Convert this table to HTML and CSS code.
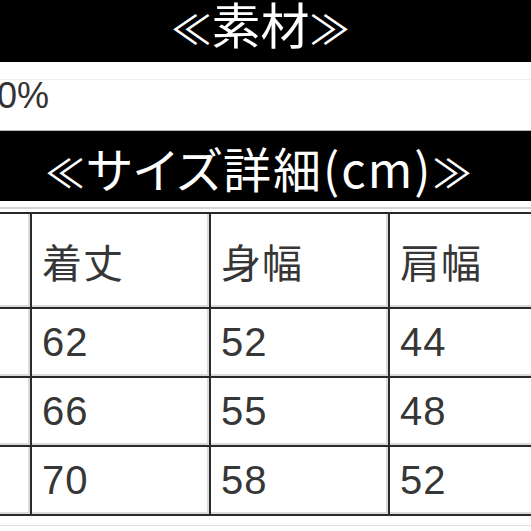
FILE: index.html
```html
<!DOCTYPE html>
<html lang="ja">
<head>
<meta charset="utf-8">
<title>素材・サイズ詳細</title>
<link rel="stylesheet" href="styles.css">
</head>
<body>
<section class="spec">
  <h2 class="band band-material"><span class="mark">≪</span>素材<span class="mark">≫</span></h2>
  <div class="material">
    <p class="material-text">綿100%</p>
  </div>
  <h2 class="band band-size"><span class="mark">≪</span>サイズ詳細(cm)<span class="mark">≫</span></h2>
  <div class="size-wrap">
    <table class="size-table">
      <colgroup>
        <col class="col-label">
        <col class="col-val">
        <col class="col-val">
        <col class="col-val">
      </colgroup>
      <tr class="row-head">
        <td>サイズ</td><td>着丈</td><td>身幅</td><td>肩幅</td>
      </tr>
      <tr class="row-data">
        <td>M</td><td>62</td><td>52</td><td>44</td>
      </tr>
      <tr class="row-data">
        <td>L</td><td>66</td><td>55</td><td>48</td>
      </tr>
      <tr class="row-data">
        <td>XL</td><td>70</td><td>58</td><td>52</td>
      </tr>
    </table>
  </div>
</section>
</body>
</html>
```
FILE: styles.css
```css
html, body {
  margin: 0;
  padding: 0;
  background: #ffffff;
}

body {
  width: 531px;
  overflow: hidden;
  font-family: "Liberation Sans", "Noto Sans CJK JP", sans-serif;
  color: #303030;
}

.spec {
  width: 531px;
}

.band {
  margin: 0;
  background: #000000;
  color: #ffffff;
  font-family: "Noto Sans CJK JP", sans-serif;
  font-weight: 400;
  font-feature-settings: "palt";
  text-align: center;
  white-space: nowrap;
  overflow: hidden;
}

.mark {
  font-size: 0.82em;
}

.band-material {
  height: 62px;
  font-size: 49px;
  line-height: 46px;
  letter-spacing: 0;
  padding-right: 10px;
  box-sizing: border-box;
}

.band-size {
  height: 70px;
  font-size: 48px;
  line-height: 73px;
  letter-spacing: 2px;
  padding-right: 12px;
  box-sizing: border-box;
}

.material {
  height: 68px;
  border-bottom: 1px solid #b8b8b8;
  overflow: hidden;
}

.material-text {
  margin: 17px 0 0 0;
  border-top: 1px solid #efefef;
  font-size: 36px;
  line-height: 32px;
  text-indent: -79px;
  white-space: nowrap;
  color: #333333;
}

.size-wrap {
  padding: 11px 0 12px 0;
  background:
    linear-gradient(#ffffff 6px, #d4d4d4 6px, #d4d4d4 8px, transparent 8px) top / 100% 12px no-repeat,
    linear-gradient(transparent 9px, #dddddd 9px, #dddddd 10px, transparent 10px) bottom / 100% 12px no-repeat;
}

.size-table {
  border-collapse: collapse;
  table-layout: fixed;
  margin-left: -190px;
  width: 757px;
}

.col-label {
  width: 220px;
}

.col-val {
  width: 179px;
}

.size-table td {
  border: 2px solid #2a2a2a;
  padding: 0 0 0 10px;
  font-size: 40px;
  letter-spacing: 1px;
  vertical-align: middle;
  text-align: left;
  white-space: nowrap;
  color: #363636;
  box-shadow: inset -2px -2px 0 #dadada;
}

.row-head td {
  height: 93px;
}

.row-data td {
  height: 67px;
}
```
